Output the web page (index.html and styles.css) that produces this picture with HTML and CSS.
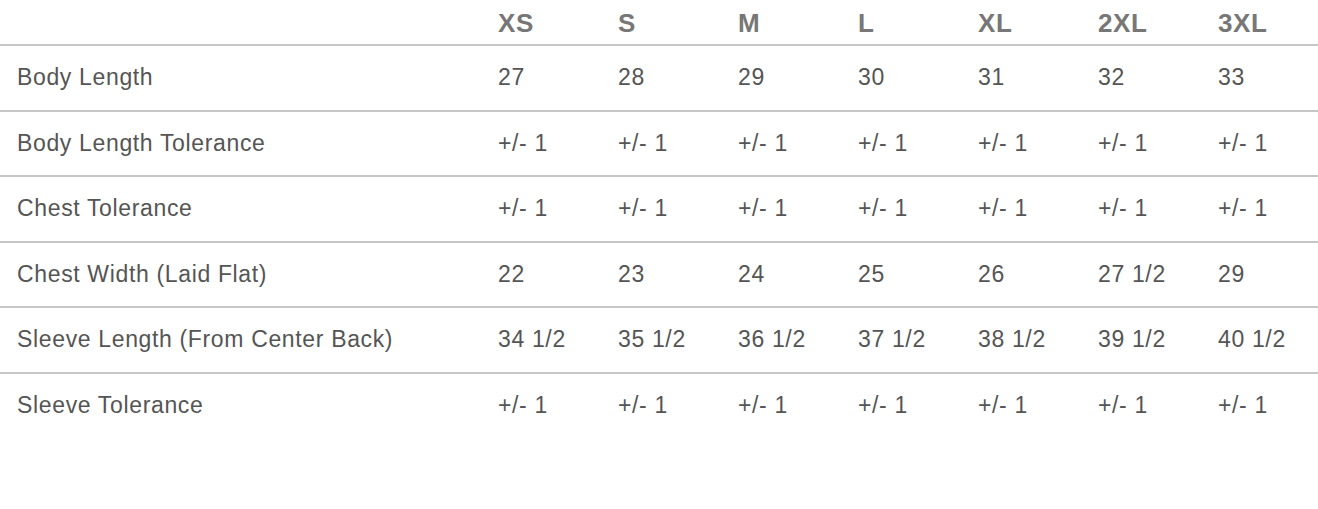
FILE: index.html
```html
<!DOCTYPE html>
<html>
<head>
<meta charset="utf-8">
<link rel="stylesheet" href="styles.css">
</head>
<body>
<table class="size-chart">
  <colgroup>
    <col class="col-label">
    <col class="col-size"><col class="col-size"><col class="col-size"><col class="col-size"><col class="col-size"><col class="col-size">
    <col class="col-last">
  </colgroup>
  <thead>
    <tr class="head-row">
      <th></th><th>XS</th><th>S</th><th>M</th><th>L</th><th>XL</th><th>2XL</th><th>3XL</th>
    </tr>
  </thead>
  <tbody>
    <tr><td class="label">Body Length</td><td>27</td><td>28</td><td>29</td><td>30</td><td>31</td><td>32</td><td>33</td></tr>
    <tr><td class="label">Body Length Tolerance</td><td>+/- 1</td><td>+/- 1</td><td>+/- 1</td><td>+/- 1</td><td>+/- 1</td><td>+/- 1</td><td>+/- 1</td></tr>
    <tr><td class="label">Chest Tolerance</td><td>+/- 1</td><td>+/- 1</td><td>+/- 1</td><td>+/- 1</td><td>+/- 1</td><td>+/- 1</td><td>+/- 1</td></tr>
    <tr><td class="label">Chest Width (Laid Flat)</td><td>22</td><td>23</td><td>24</td><td>25</td><td>26</td><td>27 1/2</td><td>29</td></tr>
    <tr><td class="label">Sleeve Length (From Center Back)</td><td>34 1/2</td><td>35 1/2</td><td>36 1/2</td><td>37 1/2</td><td>38 1/2</td><td>39 1/2</td><td>40 1/2</td></tr>
    <tr class="last"><td class="label">Sleeve Tolerance</td><td>+/- 1</td><td>+/- 1</td><td>+/- 1</td><td>+/- 1</td><td>+/- 1</td><td>+/- 1</td><td>+/- 1</td></tr>
  </tbody>
</table>
</body>
</html>
```
FILE: styles.css
```css
html, body {
  margin: 0;
  padding: 0;
  background: #ffffff;
}

.size-chart {
  width: 1318px;
  table-layout: fixed;
  border-collapse: collapse;
  border-spacing: 0;
  font-family: "Liberation Sans", Arial, sans-serif;
  font-size: 23px;
  letter-spacing: 0.65px;
  color: #555555;
}

.col-label { width: 498px; }
.col-size { width: 120px; }
.col-last { width: 100px; }

.size-chart th,
.size-chart td {
  padding: 0;
  text-align: left;
  white-space: nowrap;
  vertical-align: middle;
}

.head-row th {
  height: 41px;
  padding-top: 3px;
  font-weight: bold;
  color: #777777;
  font-size: 26px;
  letter-spacing: 0.6px;
  border-bottom: 2px solid #c6c6c6;
}

.size-chart tbody td {
  height: 63.5px;
  border-bottom: 2px solid #c6c6c6;
}

.size-chart tbody tr.last td {
  border-bottom: none;
}

.size-chart td.label {
  padding-left: 17px;
}
```
